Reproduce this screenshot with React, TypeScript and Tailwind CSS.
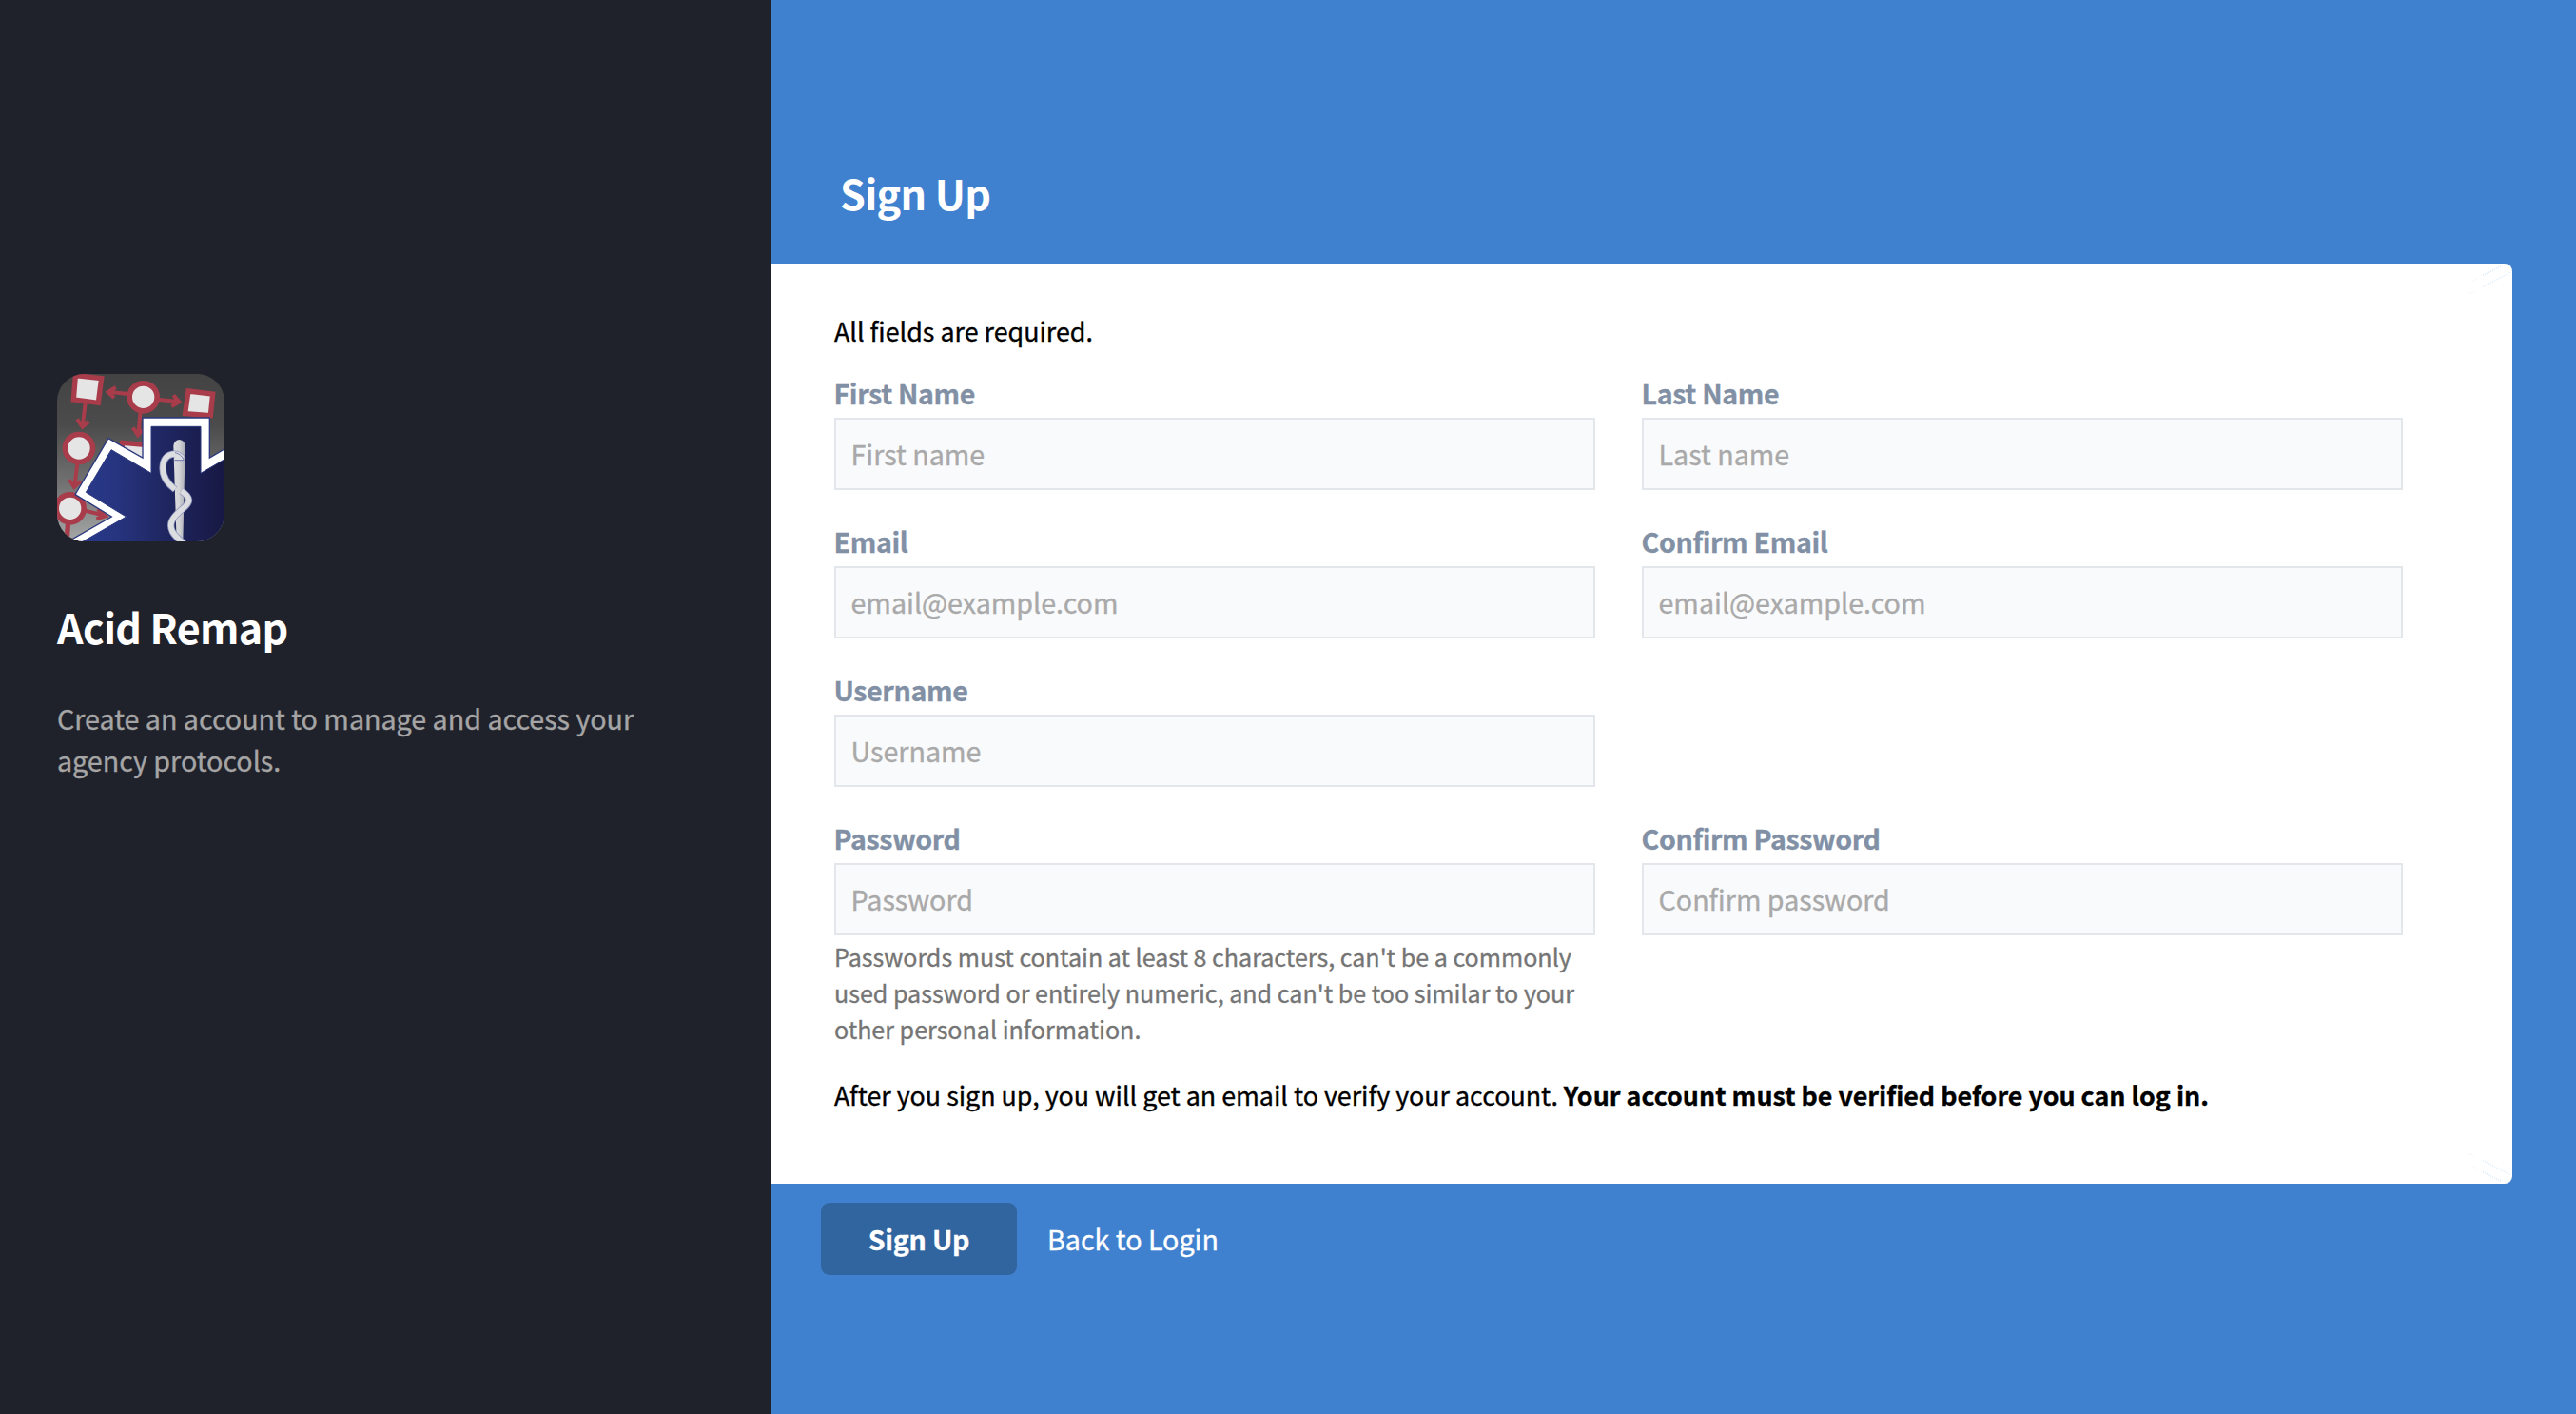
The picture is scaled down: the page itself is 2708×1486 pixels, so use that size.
import React from "react";

function Logo() {
  return (
    <svg viewBox="60 69 528 528" className="block size-44" role="img" aria-label="Acid Remap">
      <defs>
        <clipPath id="tile">
          <rect x="60" y="69" width="528" height="528" rx="86" />
        </clipPath>
        <linearGradient id="backdrop" x1="0" y1="0" x2="0" y2="1">
          <stop offset="0" stopColor="#434343" />
          <stop offset="0.3" stopColor="#4a4b4a" />
          <stop offset="0.65" stopColor="#707170" />
          <stop offset="1" stopColor="#a6a8a8" />
        </linearGradient>
        <linearGradient id="star" x1="120" y1="0" x2="588" y2="0" gradientUnits="userSpaceOnUse">
          <stop offset="0" stopColor="#293a8b" />
          <stop offset="0.25" stopColor="#273581" />
          <stop offset="0.6" stopColor="#1f2661" />
          <stop offset="1" stopColor="#171843" />
        </linearGradient>
        <linearGradient id="rod" x1="0" y1="0" x2="1" y2="0">
          <stop offset="0" stopColor="#dcdddf" />
          <stop offset="0.5" stopColor="#d2d3d6" />
          <stop offset="1" stopColor="#a9abb6" />
        </linearGradient>
      </defs>
      <g clipPath="url(#tile)">
        <rect x="60" y="69" width="528" height="528" fill="url(#backdrop)" />
        <g className="blur-[1.5px]">
          <g stroke="#a93c4a" strokeWidth="12" fill="none">
            <path d="M149 160L140 236M123 211L140 236L160 218" />
            <path d="M290 133L222 125M245 111L221 126L240 144" />
            <path d="M375 149L444 156M427 136L445 157L421 171" />
            <path d="M323 185L316 260M299 238L315 262L334 242" />
            <path d="M125 345L115 422M98 402L114 426L134 407" />
            <path d="M145 499L212 516M188 495L212 517L184 526" />
            <path d="M95 535L90 600" strokeWidth="16" />
          </g>
          <g fill="#e5e5e5" stroke="#a93c4a" strokeWidth="16">
            <path d="M118 74L200 83L190 160L112 150Z" />
            <path d="M474 123L551 132L544 200L464 194Z" />
            <path d="M266 286L345 293L345 350L262 330Z" />
          </g>
          <g fill="#e5e5e5" stroke="#a93c4a" strokeWidth="17">
            <circle cx="332" cy="142" r="43.5" />
            <circle cx="129" cy="303" r="43.5" />
            <circle cx="101" cy="493" r="43.5" />
          </g>
          <path
            d="M330 207H541V333L620 287V700H-60L60 617L232 519L117 449L222 272L330 333Z"
            fill="#fff"
            stroke="#2c387f"
            strokeWidth="4"
          />
          <path
            d="M357 235H513V382L640 308V700H-40L100 621L278 519L151 442L231 308L357 382Z"
            fill="url(#star)"
            stroke="#2c387f"
            strokeWidth="3"
          />
          <path d="M427 296Q430 276 446 276Q463 278 464 296L457 600H437Z" fill="url(#rod)" />
          <path
            d="M454 334C438 314 406 318 396 346C387 380 402 410 432 433M452 438C486 460 480 475 455 495C424 521 411 540 424 566C433 583 449 593 459 604"
            fill="none"
            stroke="#8c93bb"
            strokeWidth="22"
          />
          <path
            d="M454 334C438 314 406 318 396 346C387 380 402 410 432 433M452 438C486 460 480 475 455 495C424 521 411 540 424 566C433 583 449 593 459 604"
            fill="none"
            stroke="#dcdde0"
            strokeWidth="17"
          />
          <path d="M430 322H454L461 341H431Z" fill="#dcdde0" />
          <path d="M430 341H460C454 326 444 320 432 317" fill="none" stroke="#6f7aae" strokeWidth="3" />
        </g>
      </g>
    </svg>
  );
}

function CornerLines({ flip = false }: { flip?: boolean }) {
  return (
    <svg
      viewBox="0 0 60 40"
      aria-hidden="true"
      className={
        flip
          ? "pointer-events-none absolute right-0 bottom-0 h-10 w-[60px] -scale-y-100 opacity-80"
          : "pointer-events-none absolute top-0 right-0 h-10 w-[60px] opacity-80"
      }
    >
      <g stroke="#a9cdf0" strokeWidth="0.9" strokeDasharray="1 1.24" fill="none">
        <path d="M14 20.5L24 15.5" opacity="0.35" />
        <path d="M29 12.5L49 2.3" />
        <path d="M15 31.5L20 29.3" opacity="0.4" />
        <path d="M29 24.5L58 9.3" opacity="0.85" />
      </g>
    </svg>
  );
}

type FieldProps = { label: string; placeholder: string; type?: string; help?: string };

function Field({ label, placeholder, type = "text", help }: FieldProps) {
  return (
    <div>
      <label className="block">
        <span className="mb-1.5 -ml-[0.5px] block h-10 text-[28.6px] leading-10 font-bold tracking-[-0.36px] text-[#8190a5]">
          {label}
        </span>
        <input
          type={type}
          placeholder={placeholder}
          className="block h-[76px] w-full border-2 border-[#e3e6ea] bg-[#f9fafc] pr-[15px] pb-px pl-[15.5px] text-[28.65px] outline-none placeholder:text-[#a9a9a9]"
        />
      </label>
      {help && <p className="mt-[3px] text-[25.07px] leading-[38px] text-[#757575]">{help}</p>}
    </div>
  );
}

export default function App() {
  return (
    <div className="flex h-[1486px] w-[2708px] overflow-hidden bg-[#4081cf] font-['Noto_Sans_CJK_SC','Noto_Sans',sans-serif] [-webkit-text-stroke-width:0.35px]">
      <aside className="w-[811px] shrink-0 bg-[#20222b] px-[60px] pt-[393px]">
        <Logo />
        <h1 className="mt-[59px] h-[60px] text-[43px] leading-[60px] font-bold tracking-[-0.65px] text-white [-webkit-text-stroke-width:0px]">
          Acid Remap
        </h1>
        <p className="mt-[45px] w-[640px] text-[28.65px] leading-[44.3px] text-[#a5a5a6]">
          Create an account to manage and access your agency protocols.
        </p>
      </aside>

      <main className="flex-1 pr-[67px]">
        <h2 className="mt-[172px] mb-[45px] ml-[72px] h-[60px] text-[43px] leading-[60px] font-bold tracking-[-0.65px] text-white [-webkit-text-stroke-width:0px]">
          Sign Up
        </h2>
        <form>
          <section className="relative h-[967px] rounded-r-[8px] bg-white pt-[51px] pr-[115px] pl-[66px]">
            <CornerLines />
            <CornerLines flip />
            <p className="h-10 text-[26.85px] leading-10 text-black">All fields are required.</p>
            <div className="mt-[25px] grid grid-cols-[800px_800px] gap-x-[49px] gap-y-[34px]">
              <Field label="First Name" placeholder="First name" />
              <Field label="Last Name" placeholder="Last name" />
              <Field label="Email" placeholder="email@example.com" type="email" />
              <Field label="Confirm Email" placeholder="email@example.com" type="email" />
              <Field label="Username" placeholder="Username" />
              <div />
              <Field
                label="Password"
                placeholder="Password"
                type="password"
                help="Passwords must contain at least 8 characters, can't be a commonly used password or entirely numeric, and can't be too similar to your other personal information."
              />
              <Field label="Confirm Password" placeholder="Confirm password" type="password" />
            </div>
            <p className="mt-[31px] h-10 text-[26.83px] leading-10 text-black">
              After you sign up, you will get an email to verify your account.{" "}
              <strong className="font-bold">Your account must be verified before you can log in.</strong>
            </p>
          </section>
          <div className="mt-5 ml-[52px] flex h-[76px] items-center gap-8">
            <button
              type="button"
              className="h-[76px] w-[206px] rounded-[9px] bg-[#31659f] text-[28.6px] font-bold tracking-[-0.25px] text-white"
            >
              Sign Up
            </button>
            <a href="#" className="text-[28.65px] text-white">
              Back to Login
            </a>
          </div>
        </form>
      </main>
    </div>
  );
}
